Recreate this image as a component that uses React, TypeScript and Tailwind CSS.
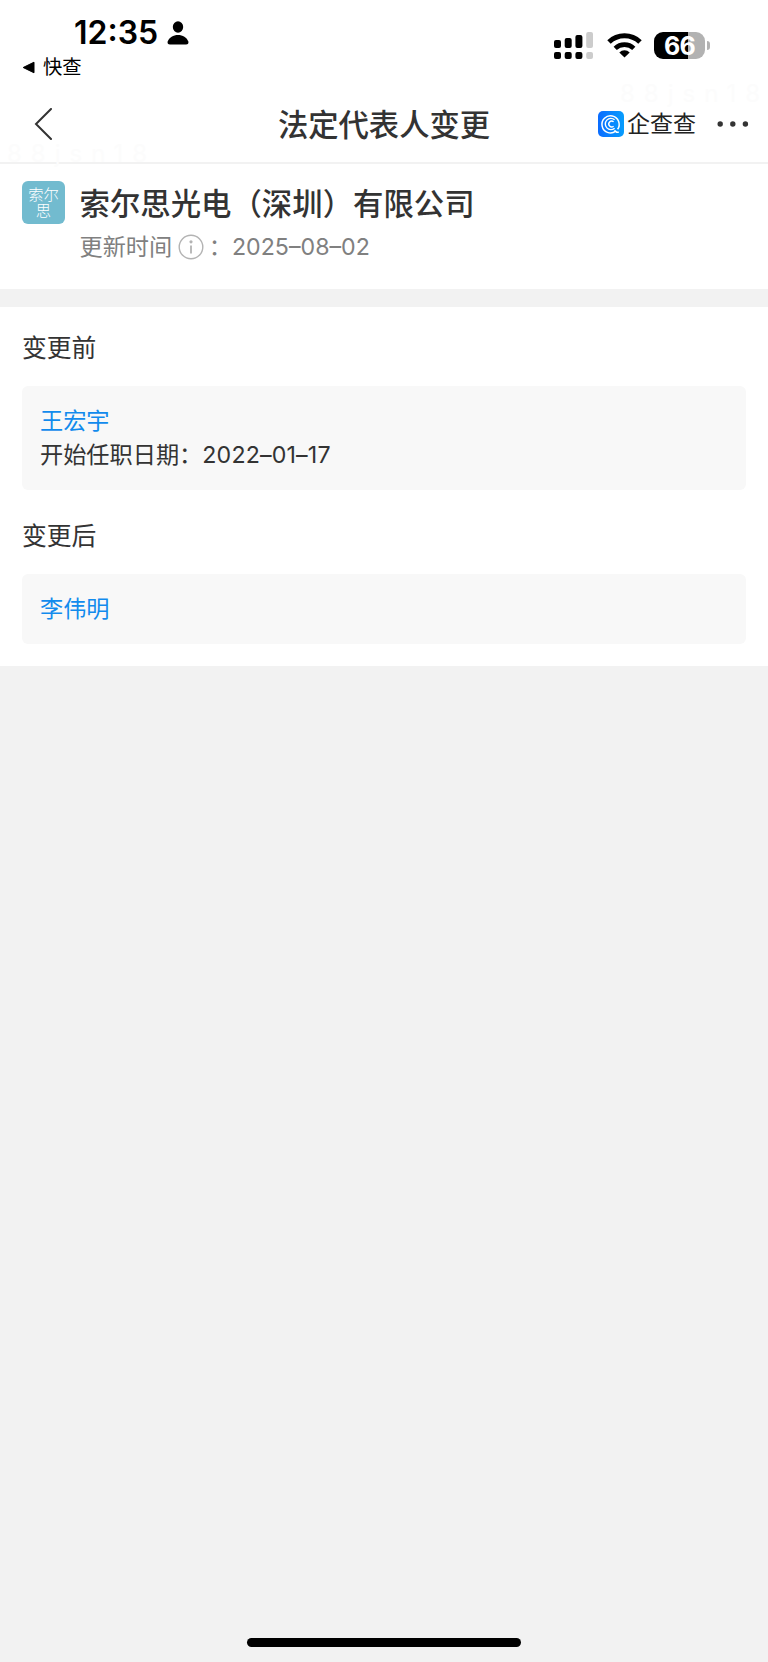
import type { ReactNode } from "react";

function StatusBar() {
  return (
    <div className="flex h-[84px] justify-between">
      <div className="pl-[22px] pt-[17px]">
        <div className="flex h-8 items-center gap-[9px] pl-[52px]">
          <span className="text-[32px] leading-8 font-semibold">12:35</span>
          <svg className="h-6 w-[22px]" viewBox="0 0 22 24" fill="black">
            <ellipse cx="11" cy="6" rx="5.2" ry="5.7" />
            <path d="M3 23.5C1 23.5 0.2 22.4 0.7 20.6C2 16.5 6.4 14 11 14S20 16.5 21.3 20.6C21.8 22.4 21 23.5 19 23.5Z" />
          </svg>
        </div>
        <div className="mt-[3px] flex h-[30px] items-center gap-2">
          <svg className="h-[13px] w-[13px]" viewBox="0 0 13 13">
            <path d="M1.2 6.5L12 1.2V11.8Z" fill="black" stroke="black" strokeLinejoin="round" />
          </svg>
          <span className="text-[19.3px] leading-[30px]">快查</span>
        </div>
      </div>
      <div className="flex h-[59px] items-end pr-[58px]">
        <svg className="h-[27px] w-[39px]" viewBox="0 0 39 27">
          <rect x="0" y="8" width="7" height="8" rx="2" />
          <rect x="10.7" y="6" width="7" height="10" rx="2" />
          <rect x="21.4" y="3" width="7" height="13" rx="2" />
          <rect x="32.2" y="0" width="6.8" height="16" rx="2" fill="#cccccc" />
          <rect x="0" y="20" width="7" height="7" rx="2" />
          <rect x="10.7" y="20" width="7" height="7" rx="2" />
          <rect x="21.4" y="20" width="7" height="7" rx="2" />
          <rect x="32.2" y="20" width="6.8" height="7" rx="2" fill="#cccccc" />
        </svg>
        <svg className="ml-[14px] h-[27px] w-[35px]" viewBox="0 0 35 27" fill="none" stroke="black">
          <path d="M2 10A22.5 22.5 0 0 1 33 10" strokeWidth="5" />
          <path d="M8.2 16.4A13.4 13.4 0 0 1 26.8 16.4" strokeWidth="4.6" />
          <path d="M17.5 25.5L12.3 20.4A7.4 7.4 0 0 1 22.7 20.4Z" fill="black" stroke="none" />
        </svg>
        <div className="ml-[12.5px] flex items-center gap-0.5">
          <div className="flex h-[27px] w-[51px] items-center justify-center rounded-[9px] bg-linear-to-r from-black from-[66%] to-[#b2b2b2] to-[66%] pt-px text-[25px] leading-[27px] font-bold tracking-[-0.8px] text-white">
            66
          </div>
          <div className="h-[9px] w-[3px] rounded-r-full bg-[#b2b2b2]" />
        </div>
      </div>
    </div>
  );
}

function BrandLogo() {
  return (
    <svg className="h-[26px] w-[26px]" viewBox="0 0 26 26" fill="none" stroke="white">
      <defs>
        <linearGradient id="brand" x1="0" y1="0" x2="1" y2="0">
          <stop offset="0" stopColor="#0a6cff" />
          <stop offset="1" stopColor="#079dfd" />
        </linearGradient>
      </defs>
      <rect width="26" height="26" rx="5" fill="url(#brand)" stroke="none" />
      <path d="M17.5 20.4A8.6 8.6 0 1 1 19.6 18.3M16.4 19.4L18.6 21.2H20.8" strokeWidth="1.5" />
      <path d="M16.6 17.2A5.6 5.6 0 1 1 16.6 8.8" strokeWidth="1.4" />
      <path d="M15.6 15.2A2.9 2.9 0 1 1 15.6 10.8" strokeWidth="1.4" />
    </svg>
  );
}

function NavBar() {
  return (
    <div className="relative flex h-20 items-center justify-between border-b-2 border-[#f2f2f2] pt-0.5 pr-[19px] pl-[33px]">
      <svg className="h-8 w-[20px]" viewBox="0 0 20 32" fill="none" stroke="#333333" strokeWidth="2">
        <path d="M18 1L3 16L18 31" strokeLinecap="round" />
      </svg>
      <h1 className="absolute inset-x-0 top-[21px] text-center text-[30.3px] leading-10 font-medium text-[#333333]">
        法定代表人变更
      </h1>
      <div className="flex items-center">
        <BrandLogo />
        <span className="ml-[3px] text-[23px] leading-[26px] text-[#222222]">企查查</span>
        <svg className="ml-[21px] h-[6px] w-[32px]" viewBox="0 0 32 6" fill="#333333">
          <circle cx="3.2" cy="3" r="2.7" />
          <circle cx="15.8" cy="3" r="2.7" />
          <circle cx="28.4" cy="3" r="2.7" />
        </svg>
      </div>
    </div>
  );
}

function CompanyCard() {
  return (
    <div className="flex h-[125px] px-[22px] pt-[17px]">
      <div className="flex h-[43px] w-[43px] items-center justify-center rounded-md bg-[#72bbcf] text-center text-[15.3px] leading-4 font-light text-white">
        索尔
        <br />思
      </div>
      <div className="ml-[14.5px]">
        <h2 className="pt-px text-[30.4px] leading-[44px] font-medium text-[#333333]">
          索尔思光电（深圳）有限公司
        </h2>
        <div className="flex h-[42px] items-center text-[23.2px] text-[#808080]">
          <span>更新时间</span>
          <svg className="ml-[5.5px] h-[26px] w-[26px]" viewBox="0 0 26 26" fill="none" stroke="#b3b3b3">
            <circle cx="13" cy="13" r="11.8" strokeWidth="1.4" />
            <circle cx="13" cy="7.8" r="1.6" fill="#b3b3b3" stroke="none" />
            <path d="M13 11.5V19.5" strokeWidth="1.8" />
          </svg>
          <span className="ml-[5px]">：</span>
          <span>2025–08–02</span>
        </div>
      </div>
    </div>
  );
}

function Change({ title, children }: { title: string; children: ReactNode }) {
  return (
    <section>
      <h3 className="pt-[1.5px] text-[24.8px] leading-[35px]">{title}</h3>
      <div className="mt-[20.5px] rounded-md bg-[#f8f8f8] px-[18px] py-[18px] text-[23.2px] leading-[34px]">
        {children}
      </div>
    </section>
  );
}

export default function App() {
  return (
    <div className="flex min-h-screen flex-col bg-[#f2f2f2] font-['Inter','Noto_Sans_CJK_SC',sans-serif] text-black">
      <header className="relative bg-white">
        <StatusBar />
        <NavBar />
        <span className="absolute top-[82px] left-[620px] text-[24px] leading-6 tracking-[9px] text-[#fcfcfc]">
          88jsn18
        </span>
        <span className="absolute top-[142px] left-[7px] text-[24px] leading-6 tracking-[9px] text-[#fcfcfc]">
          88jsn18
        </span>
      </header>
      <main>
        <div className="bg-white">
          <CompanyCard />
        </div>
        <div className="mt-[18px] flex flex-col gap-[27px] bg-white px-[22px] pt-[22px] pb-[22px] text-[#333333]">
          <Change title="变更前">
            <p className="text-[#128bed]">王宏宇</p>
            <p>
              开始任职日期：<span className="tracking-[0.15px]">2022–01–17</span>
            </p>
          </Change>
          <Change title="变更后">
            <p className="text-[#128bed]">李伟明</p>
          </Change>
        </div>
      </main>
      <div className="mt-auto mb-[15px] h-[9px] w-[274px] self-center rounded-full bg-black" />
    </div>
  );
}
